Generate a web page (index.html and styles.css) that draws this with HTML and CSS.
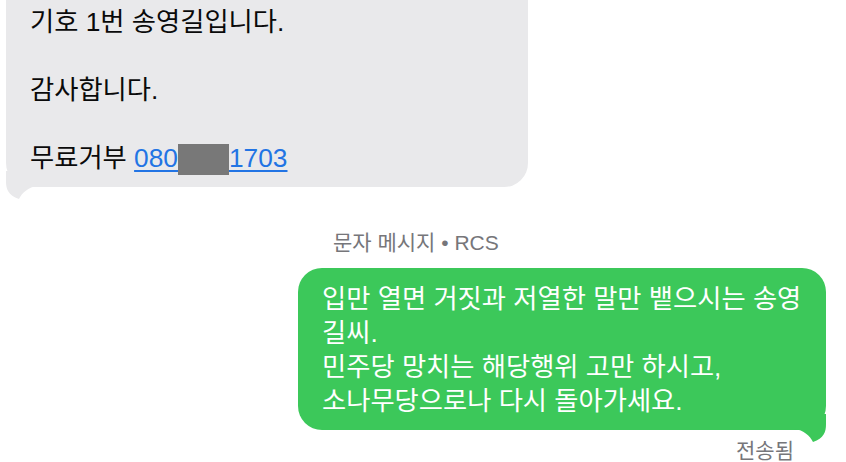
FILE: index.html
```html
<!DOCTYPE html>
<html lang="ko">
<head>
    <meta charset="UTF-8">
    <meta name="viewport" content="width=device-width, initial-scale=1.0">
    <title>메시지</title>
    <link rel="stylesheet" href="styles.css">
</head>
<body>
    <div class="thread">
        <!-- 받은 메시지 -->
        <div class="bubble bubble--in">
            <p>기호 1번 송영길입니다.</p>
            <p>&nbsp;</p>
            <p>감사합니다.</p>
            <p>&nbsp;</p>
            <p>무료거부 <a class="phone" href="#">080<span class="masked"></span>1703</a></p>
            <svg class="tail tail--in" width="32" height="28" viewBox="0 0 32 28">
                <path d="M32 0 H0 V10 C0 18 2 24 13 28 C16 22 22 16 32 15 Z"></path>
            </svg>
        </div>

        <div class="service">문자 메시지 • RCS</div>

        <!-- 보낸 메시지 -->
        <div class="bubble bubble--out">
            <p>입만 열면 거짓과 저열한 말만 뱉으시는 송영길씨.</p>
            <p>민주당 망치는 해당행위 고만 하시고,</p>
            <p>소나무당으로나 다시 돌아가세요.</p>
            <svg class="tail tail--out" width="32" height="28" viewBox="0 0 32 28">
                <path d="M0 0 H32 V10 C32 18 30 24 19 28 C16 22 10 16 0 15 Z"></path>
            </svg>
        </div>

        <div class="status">전송됨</div>
    </div>
</body>
</html>
```

FILE: styles.css
```css
*{
    margin: 0;
    padding: 0;
    box-sizing: border-box;
}
html,body{
    width: 846px;
    height: 462px;
    overflow: hidden;
    background-color: #fff;
}
body{
    font-family: "Liberation Sans", "Noto Sans CJK KR", sans-serif;
    color: #0a0a0a;
}
.thread{
    display: flex;
    flex-direction: column;
    padding: 0 20px 0 6px;
}
.bubble{
    position: relative;
    width: 522px;
    padding: 12px 24px;
    border-radius: 24px;
    font-size: 26.3px;
    line-height: 34px;
    word-break: break-all;
}
.bubble--in{
    align-self: flex-start;
    margin-top: -40px;
    padding-top: 45px;
    background-color: #e9e9eb;
}
.bubble--out{
    align-self: flex-end;
    width: 528px;
    margin-top: 13px;
    padding-top: 14px;
    background-color: #3cc85a;
    color: #fff;
}
.tail{
    position: absolute;
    bottom: -12px;
}
.tail--in{
    left: 0;
    fill: #e9e9eb;
}
.tail--out{
    right: 0;
    fill: #3cc85a;
}
.phone{
    color: #2274e4;
    text-decoration: underline;
    text-decoration-thickness: 2px;
    text-underline-offset: 3px;
}
.masked{
    display: inline-block;
    width: 51px;
    height: 31px;
    vertical-align: -8px;
    background-color: #787878;
}
.service{
    align-self: flex-start;
    margin: 44px 0 0 327px;
    font-size: 21px;
    line-height: 24px;
    color: #76767a;
}
.status{
    align-self: flex-end;
    margin: 12px 32px 0 0;
    font-size: 21px;
    line-height: 18px;
    color: #76767a;
}
```
